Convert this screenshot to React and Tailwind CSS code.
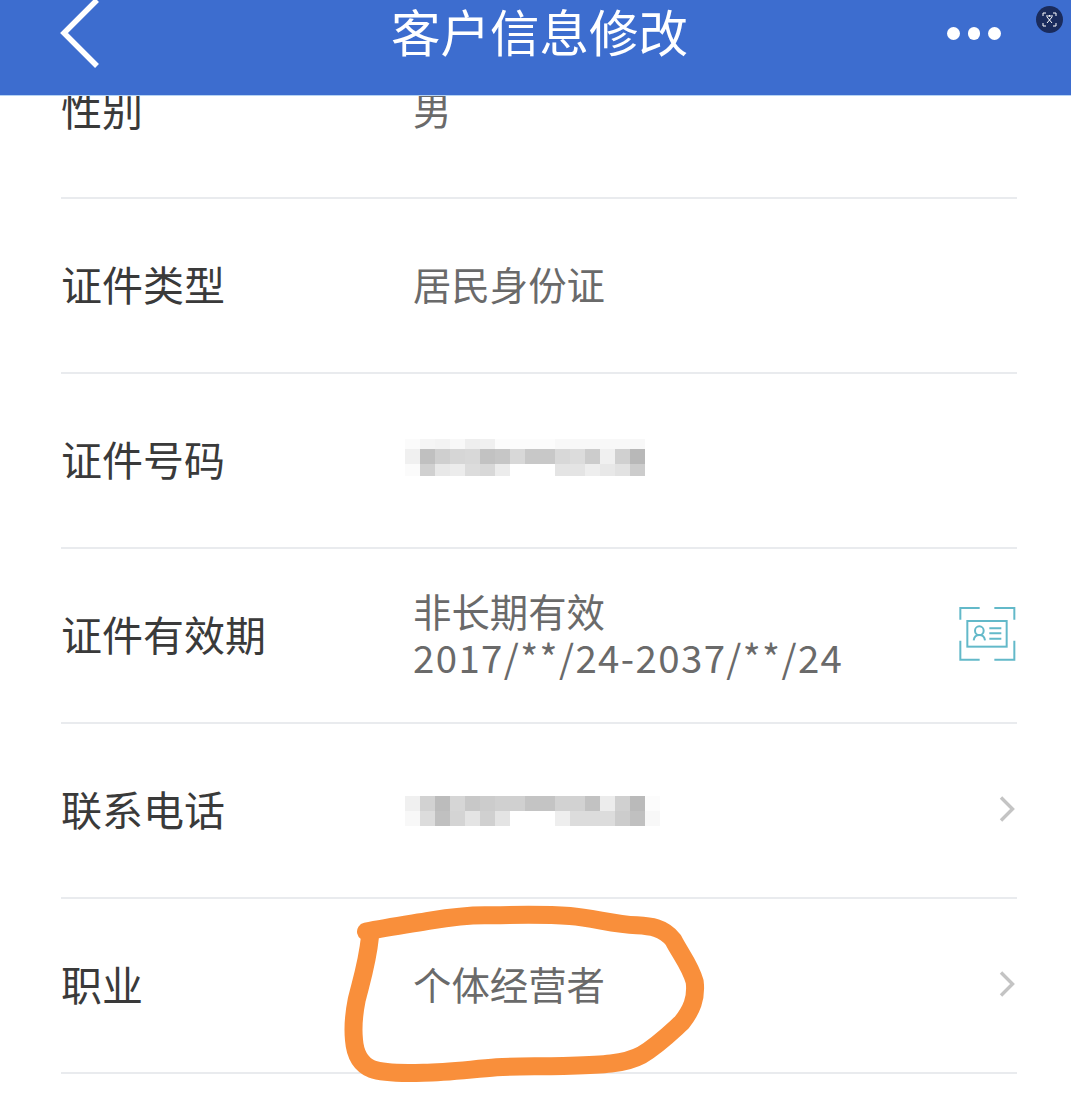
const cjk = "font-['Noto_Sans_CJK_SC','Noto_Sans',sans-serif]";

// mosaic cells copied from the blurred numbers, one array per row
const idMosaic = [
  { h: 'h-[10px]', cells: ['#fbfbfb', '#f5f5f5', '#f3f3f3', '#f8f8f8', '#eeeeee', '#f0f0f0', '#fcfcfc', '#fcfcfc', '#fcfcfc', '#fcfcfc', '#f8f8f8', '#f8f8f8', '#f8f8f8', '#f8f8f8', '#f8f8f8', '#f8f8f8'] },
  { h: 'h-[15px]', cells: ['#f0f0f0', '#c0c0c0', '#cfcfcf', '#d6d6d6', '#d8d8d8', '#c2c2c2', '#c6c6c6', '#d8d8d8', '#c8c8c8', '#c8c8c8', '#d8d8d8', '#dcdcdc', '#cccccc', '#f0f0f0', '#d0d0d0', '#b8b8b8'] },
  { h: 'h-[12px]', cells: ['#fbfbfb', '#d0d0d0', '#e8e8e8', '#ececec', '#dcdcdc', '#d8d8d8', '#ececec', '#ffffff', '#ffffff', '#ffffff', '#e4e4e4', '#e4e4e4', '#eeeeee', '#e8e8e8', '#e2e2e2', '#cccccc'] },
];

const phoneMosaic = [
  { h: 'h-[15px]', cells: ['#f0f0f0', '#d2d2d2', '#bcbcbc', '#d6d6d6', '#c8c8c8', '#cccccc', '#d0d0d0', '#d0d0d0', '#c4c4c4', '#c4c4c4', '#d2d2d2', '#d2d2d2', '#c2c2c2', '#ececec', '#d0d0d0', '#bababa', '#fcfcfc'] },
  { h: 'h-[15px]', cells: ['#f8f8f8', '#dcdcdc', '#c0c0c0', '#d4d4d4', '#e4e4e4', '#d0d0d0', '#e4e4e4', '#ffffff', '#ffffff', '#ffffff', '#eeeeee', '#dcdcdc', '#dcdcdc', '#dcdcdc', '#cccccc', '#c0c0c0', '#f8f8f8'] },
];

function Mosaic({ rows, className }) {
  return (
    <div className={`-ml-2 flex flex-col ${className || ''}`}>
      {rows.map((row, i) => (
        <div key={i} className={`flex ${row.h}`}>
          {row.cells.map((c, j) => (
            <div key={j} className="w-[15px]" style={{ backgroundColor: c }} />
          ))}
        </div>
      ))}
    </div>
  );
}

function Chevron() {
  return (
    <svg width="18" height="28" viewBox="0 0 18 28" fill="none" className="mr-px -mt-[3px]">
      <path d="M3 2.5 L14.5 14 L3 25.5" stroke="#c4c4c4" strokeWidth="3.4" />
    </svg>
  );
}

function CardIcon() {
  return (
    <svg width="60" height="60" viewBox="50 45 180 180" fill="none" stroke="#63b9c9" strokeWidth="6" className="-mt-[3px]">
      <path d="M60 92 V57 H118" />
      <path d="M162 57 H222 V92" />
      <path d="M60 155 V212 H118" />
      <path d="M162 212 H222 V155" />
      <rect x="81" y="96" width="118" height="77" />
      <circle cx="117" cy="125" r="13" />
      <path d="M100 154 C102 140 110 138 117 138 C124 138 132 140 134 154" />
      <path d="M147 118 H183 M147 133 H183 M147 149 H183" />
    </svg>
  );
}

function Row({ label, children, right, overlay }) {
  return (
    <div className="relative flex h-[175px] items-center border-b-2 border-[#e9ebee]">
      <div className="-mt-[4px] w-[352px] shrink-0 text-[41px] leading-none text-[#3a3a3a]">{label}</div>
      <div className="-mt-[6px] flex-1 text-[38.4px] leading-[46px] text-[#6a6a6a]">{children}</div>
      {right}
      {overlay}
    </div>
  );
}

export default function App() {
  return (
    <div className={`relative h-[1113px] w-[1071px] overflow-hidden bg-white ${cjk}`}>
      <header className="relative z-10 flex h-[96px] items-center justify-center border-b border-[#b5d3f3] bg-[#3d6dcf]">
        <svg width="50" height="76" viewBox="0 0 50 76" fill="none" className="absolute left-[55px] top-[-4px]">
          <path d="M42 4 L9 37 L42 70" stroke="white" strokeWidth="5.5" />
        </svg>
        <h1 className="-mt-[34px] ml-2 text-[49.5px] leading-none font-normal text-white">客户信息修改</h1>
        <div className="absolute left-[947px] top-[27px] flex gap-[8px]">
          <span className="size-[12.5px] rounded-full bg-white" />
          <span className="size-[12.5px] rounded-full bg-white" />
          <span className="size-[12.5px] rounded-full bg-white" />
        </div>
        <div className="absolute left-[1036px] top-[6px] flex size-[27px] items-center justify-center rounded-full bg-[#1a2b5c]">
          <svg width="15" height="15" viewBox="0 0 15 15" fill="none" stroke="white" strokeWidth="1">
            <path d="M1 4 V1 H4 M11 1 H14 V4 M1 11 V14 H4 M11 14 H14 V11" />
            <path d="M4 4 H11 M7.5 3 V4.5 M5 5 L10 11 M10 5 L5 11" />
          </svg>
        </div>
      </header>

      <main className="-mt-[72px] mr-[54px] ml-[61px]">
        <Row label="性别">男</Row>
        <Row label="证件类型">居民身份证</Row>
        <Row label="证件号码">
          <Mosaic rows={idMosaic} />
        </Row>
        <Row label="证件有效期" right={<CardIcon />}>
          <div>非长期有效</div>
          <div className="tracking-[1.4px]">2017/**/24-2037/**/24</div>
        </Row>
        <Row label="联系电话" right={<Chevron />}>
          <Mosaic rows={phoneMosaic} className="mt-[6px]" />
        </Row>
        <Row
          label="职业"
          right={<Chevron />}
          overlay={
            <svg width="400" height="200" viewBox="0 0 1200 600" fill="none" className="absolute left-[269px] top-[-9px]">
              <path
                d="M108 125 C170 112 240 102 300 92 C360 82 420 74 480 76 C560 74 640 72 720 78 C790 84 850 102 920 106 C960 108 1000 112 1030 150 C1050 190 1080 225 1094 275 C1100 325 1085 360 1055 398 C1020 430 985 465 935 495 C880 525 800 525 700 528 C620 530 560 528 500 532 C420 538 350 548 280 548 C220 550 160 550 125 537 C90 522 75 490 72 450 C68 410 72 370 80 330 C92 280 112 220 120 140"
                stroke="#f98f3b"
                strokeWidth="54"
                strokeLinecap="round"
                strokeLinejoin="round"
              />
            </svg>
          }
        >
          个体经营者
        </Row>
      </main>
    </div>
  );
}
